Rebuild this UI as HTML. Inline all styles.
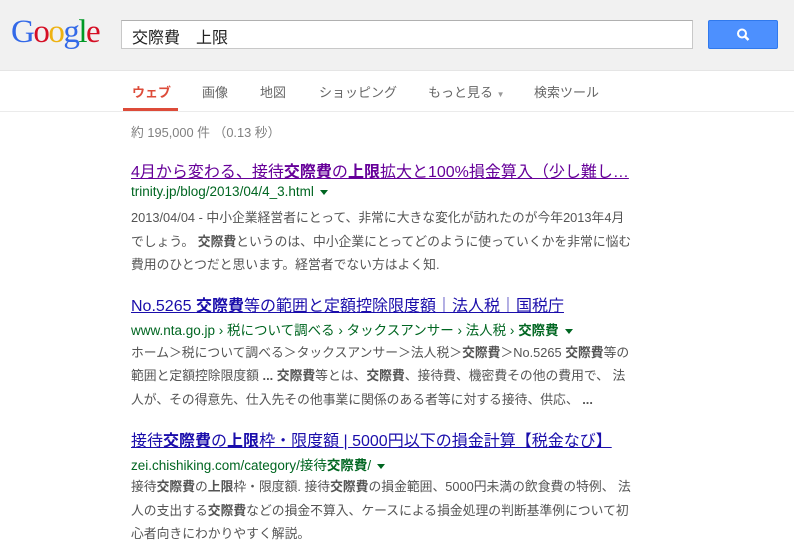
<!DOCTYPE html>
<html><head><meta charset="utf-8"><style>
*{margin:0;padding:0;box-sizing:border-box}
body{width:794px;height:553px;overflow:hidden;background:#fff;font-family:"Liberation Sans","Noto Sans CJK JP",sans-serif;position:relative}
#hd{position:absolute;left:0;top:0;width:794px;height:71px;background:#f1f1f1;border-bottom:1px solid #e5e5e5}
#logo{position:absolute;left:11px;top:14px;font-family:"Liberation Serif",serif;font-size:33px;letter-spacing:-1.5px}
#box{position:absolute;left:121px;top:20px;width:572px;height:29px;background:#fff;border:1px solid #c8c8c8;border-top-color:#b0b0b0;font-size:16px;padding:3px 0 0 10px;color:#222}
#btn{position:absolute;left:708px;top:20px;width:70px;height:29px;background:#4d90fe;border:1px solid #3079ed;border-radius:2px}
#nav{position:absolute;top:82px;font-size:13px;color:#666;white-space:nowrap}
#ul{position:absolute;left:123px;top:108px;width:55px;height:3px;background:#dd4b39}
#sep{position:absolute;left:0;top:111px;width:794px;height:1px;background:#ebebeb}
.l{position:absolute;left:131px;white-space:nowrap}
.t{font-size:16px;color:#1a0dab;text-decoration:underline}
.t.v{color:#609}
.u{font-size:13.5px;color:#006621}
.s{font-size:12.8px;color:#545454}
b{font-weight:bold}
.ar{display:inline-block;width:0;height:0;border-left:4px solid transparent;border-right:4px solid transparent;border-top:5px solid #006621;margin-left:6px;vertical-align:middle}
</style></head><body>
<div id="hd">
<div id="logo"><span style="color:#3369e8">G</span><span style="color:#d50f25">o</span><span style="color:#eeb211">o</span><span style="color:#3369e8">g</span><span style="color:#009925">l</span><span style="color:#d50f25">e</span></div>
<div id="box">交際費　上限</div>
<div id="btn"><svg width="70" height="29" viewBox="0 0 70 29"><circle cx="33" cy="12.5" r="4" fill="none" stroke="#fff" stroke-width="2"/><path d="M36 15.5l3.5 3.5" stroke="#fff" stroke-width="2.5"/></svg></div>
</div>
<div id="nav" style="left:132px;color:#dd4b39;font-weight:bold">ウェブ</div>
<div id="nav" style="left:202px">画像</div>
<div id="nav" style="left:260px">地図</div>
<div id="nav" style="left:319px">ショッピング</div>
<div id="nav" style="left:428px">もっと見る <span style="font-size:8px;color:#999">▼</span></div>
<div id="nav" style="left:534px">検索ツール</div>
<div id="ul"></div><div id="sep"></div>
<div class="l s" style="top:122px;color:#808080">約 195,000 件 （0.13 秒）</div>

<div class="l t v" style="top:158px">4月から変わる、接待<b>交際費</b>の<b>上限</b>拡大と100%損金算入（少し難し…</div>
<div class="l u" style="top:184px">trinity.jp/blog/2013/04/4_3.html<span class="ar"></span></div>
<div class="l s" style="top:207px">2013/04/04 - 中小企業経営者にとって、非常に大きな変化が訪れたのが今年2013年4月</div>
<div class="l s" style="top:231px">でしょう。 <b>交際費</b>というのは、中小企業にとってどのように使っていくかを非常に悩む</div>
<div class="l s" style="top:254px">費用のひとつだと思います。経営者でない方はよく知.</div>

<div class="l t" style="top:292px">No.5265 <b>交際費</b>等の範囲と定額控除限度額｜法人税｜国税庁</div>
<div class="l u" style="top:319px">www.nta.go.jp › 税について調べる › タックスアンサー › 法人税 › <b>交際費</b><span class="ar"></span></div>
<div class="l s" style="top:342px">ホーム＞税について調べる＞タックスアンサー＞法人税＞<b>交際費</b>＞No.5265 <b>交際費</b>等の</div>
<div class="l s" style="top:365px">範囲と定額控除限度額 <b>...</b> <b>交際費</b>等とは、<b>交際費</b>、接待費、機密費その他の費用で、 法</div>
<div class="l s" style="top:389px">人が、その得意先、仕入先その他事業に関係のある者等に対する接待、供応、 <b>...</b></div>

<div class="l t" style="top:427px">接待<b>交際費</b>の<b>上限</b>枠・限度額 | 5000円以下の損金計算【税金なび】</div>
<div class="l u" style="top:454px">zei.chishiking.com/category/接待<b>交際費</b>/<span class="ar"></span></div>
<div class="l s" style="top:476px">接待<b>交際費</b>の<b>上限</b>枠・限度額. 接待<b>交際費</b>の損金範囲、5000円未満の飲食費の特例、 法</div>
<div class="l s" style="top:500px">人の支出する<b>交際費</b>などの損金不算入、ケースによる損金処理の判断基準例について初</div>
<div class="l s" style="top:523px">心者向きにわかりやすく解説。</div>
</body></html>
